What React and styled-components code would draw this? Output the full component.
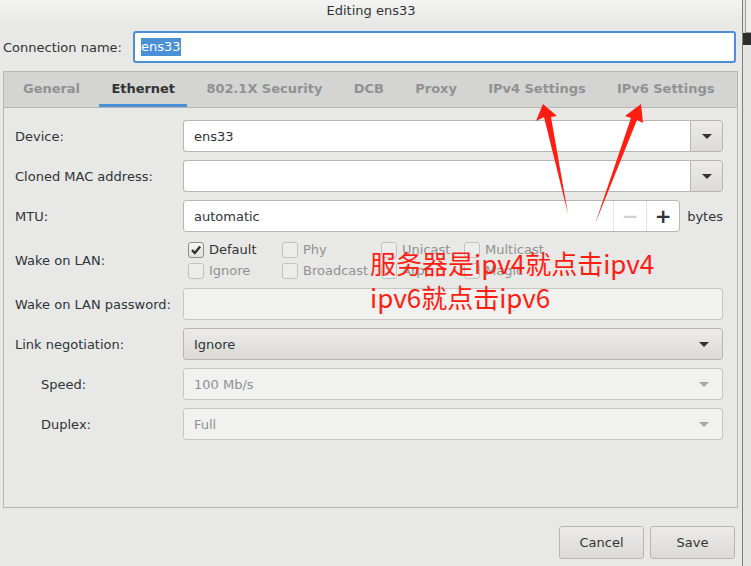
import React from 'react'
import styled, { createGlobalStyle, css } from 'styled-components'

const GlobalStyle = createGlobalStyle`
  html, body {
    margin: 0;
    padding: 0;
    background: #e8e8e7;
    overflow: hidden;
  }
  body {
    font-family: "DejaVu Sans", "Liberation Sans", sans-serif;
    font-size: 13px;
    color: #2e3436;
  }
`

const Shell = styled.div`
  position: relative;
  display: flex;
  width: 751px;
  height: 566px;
  overflow: hidden;
`

const Dialog = styled.div`
  width: 742px;
  display: flex;
  flex-direction: column;
`

const Edge = styled.div`
  flex: 1;
  border-left: 1px solid #7f7f7f;
  display: flex;
  flex-direction: column;
  background: #e4e4e3;
`

const EdgeThumb = styled.div`
  height: 32px;
  margin-left: 2px;
  border-left: 1px solid #9c9c9c;
  border-bottom: 1px solid #9c9c9c;
  background: #ededec;
`

const EdgeDark = styled.div`
  height: 12px;
  background: #2d2d2d;
`

const TitleBar = styled.div`
  height: 24px;
  line-height: 22px;
  text-align: center;
  background: linear-gradient(#f4f4f3, #e8e8e7);
  color: #2e3436;
`

const NameRow = styled.div`
  display: flex;
  align-items: center;
  margin-top: 7px;
  padding: 0 6px 0 3px;
`

const NameLabel = styled.span`
  width: 130px;
`

const NameInput = styled.div`
  flex: 1;
  height: 28px;
  border: 2px solid #4a90d9;
  border-radius: 3px;
  background: #fff;
  display: flex;
  align-items: center;
  padding-left: 6px;
`

const Selected = styled.span`
  background: #4a90d9;
  color: #fff;
  line-height: 18px;
`

const Notebook = styled.div`
  margin: 8px 4px 0 3px;
  height: 435px;
  border: 1px solid #b6b6b3;
  display: flex;
  flex-direction: column;
`

const TabBar = styled.div`
  height: 35px;
  display: flex;
  gap: 7.4px;
  padding-left: 7px;
  background: #d4d4d3;
  border-bottom: 1px solid #b6b6b3;
`

const Tab = styled.div`
  padding: 0 12px;
  display: flex;
  align-items: center;
  font-weight: bold;
  letter-spacing: -0.03px;
  color: ${(p) => (p.$active ? '#2e3436' : '#8f9293')};
  border-bottom: 3px solid ${(p) => (p.$active ? '#4a90d9' : 'transparent')};
`

const Content = styled.div`
  flex: 1;
  padding: 12px 14px 0 11px;
`

const Form = styled.div`
  display: grid;
  grid-template-columns: 168px 1fr;
  row-gap: 8px;
  align-items: center;
`

const Label = styled.span`
  padding-left: ${(p) => (p.$indent ? '26px' : '0')};
`

const fieldBox = css`
  height: 30px;
  border: 1px solid #b6b6b3;
  border-radius: 3px;
  box-sizing: content-box;
`

const Combo = styled.div`
  display: flex;
`

const Entry = styled.div`
  ${fieldBox};
  flex: 1;
  display: flex;
  align-items: center;
  padding-left: 10px;
  background: ${(p) => (p.$disabled ? '#f1f1f0' : '#fff')};
  border-color: ${(p) => (p.$disabled ? '#c8c6c3' : '#b6b6b3')};
  ${(p) =>
    p.$joined &&
    css`
      border-right: none;
      border-radius: 3px 0 0 3px;
    `}
`

const DropButton = styled.div`
  ${fieldBox};
  width: 31px;
  display: flex;
  align-items: center;
  justify-content: center;
  border-radius: 0 3px 3px 0;
  background: linear-gradient(#edebe9, #dcdad6);
`

const Caret = styled.span`
  width: 0;
  height: 0;
  border-left: 5px solid transparent;
  border-right: 5px solid transparent;
  border-top: 5px solid ${(p) => (p.$disabled ? '#a3a5a6' : '#2e3436')};
`

const SelectBox = styled.div`
  ${fieldBox};
  display: flex;
  align-items: center;
  justify-content: space-between;
  padding: 0 13px 0 10px;
  color: ${(p) => (p.$disabled ? '#8f9293' : '#2e3436')};
  border-color: ${(p) => (p.$disabled ? '#c8c6c3' : '#b6b6b3')};
  background: ${(p) => (p.$disabled ? '#f1f1f0' : 'linear-gradient(#edebe9, #dcdad6)')};
`

const SpinRow = styled.div`
  display: flex;
  align-items: center;
  gap: 7px;
`

const Spin = styled.div`
  ${fieldBox};
  flex: 1;
  display: flex;
  background: #fff;
`

const SpinText = styled.div`
  flex: 1;
  display: flex;
  align-items: center;
  padding-left: 10px;
`

const SpinButton = styled.div`
  width: 32px;
  border-left: 1px solid #e4e4e3;
  display: flex;
  align-items: center;
  justify-content: center;
  font-size: 20px;
  font-weight: bold;
  color: ${(p) => (p.$disabled ? '#d2d2d1' : '#2e3436')};
`

const CheckGrid = styled.div`
  display: grid;
  grid-template-columns: 94px 99px 83px 1fr;
  grid-template-rows: 21px 21px;
  padding-left: 5px;
  height: 40px;
  align-content: center;
`

const CheckItem = styled.label`
  display: flex;
  align-items: center;
  gap: 5px;
  color: ${(p) => (p.$disabled ? '#8f9293' : '#2e3436')};
`

const Box = styled.span`
  width: 14px;
  height: 14px;
  border: 1px solid ${(p) => (p.$checked ? '#8a8d8e' : '#c4c2bf')};
  border-radius: 3px;
  background: ${(p) => (p.$checked ? 'linear-gradient(#f6f6f5, #e2e1de)' : '#ececeb')};
  display: flex;
  align-items: center;
  justify-content: center;
`

const Footer = styled.div`
  display: flex;
  justify-content: flex-end;
  gap: 6px;
  padding: 18px 7px 0 0;
`

const Button = styled.div`
  width: 83px;
  height: 31px;
  border: 1px solid #b6b6b3;
  border-radius: 3px;
  background: linear-gradient(#edebe9, #dcdad6);
  display: flex;
  align-items: center;
  justify-content: center;
`

const Note = styled.div`
  position: absolute;
  left: 370px;
  top: 246px;
  font-family: "Noto Sans CJK SC", "Noto Sans", sans-serif;
  font-size: 26px;
  line-height: 34px;
  color: #ff1d12;
  white-space: nowrap;
  pointer-events: none;
`

const Arrows = styled.svg`
  position: absolute;
  left: 0;
  top: 0;
  pointer-events: none;
`

const tabs = ['General', 'Ethernet', '802.1X Security', 'DCB', 'Proxy', 'IPv4 Settings', 'IPv6 Settings']

const wake = [
  ['Default', true],
  ['Phy', false],
  ['Unicast', false],
  ['Multicast', false],
  ['Ignore', false],
  ['Broadcast', false],
  ['Arp', false],
  ['Magic', false],
]

const Check = ({ label, checked }) => (
  <CheckItem $disabled={!checked}>
    <Box $checked={checked}>
      {checked && (
        <svg width="12" height="12" viewBox="0 0 12 12">
          <path d="M2 6.2 L4.8 9 L10.2 2.6" fill="none" stroke="#2e3436" strokeWidth="2.4" />
        </svg>
      )}
    </Box>
    {label}
  </CheckItem>
)

export default function App() {
  return (
    <Shell>
      <GlobalStyle />
      <Dialog>
        <TitleBar>Editing ens33</TitleBar>
        <NameRow>
          <NameLabel>Connection name:</NameLabel>
          <NameInput><Selected>ens33</Selected></NameInput>
        </NameRow>
        <Notebook>
          <TabBar>
            {tabs.map((t) => (
              <Tab key={t} $active={t === 'Ethernet'}>{t}</Tab>
            ))}
          </TabBar>
          <Content>
            <Form>
              <Label>Device:</Label>
              <Combo>
                <Entry $joined>ens33</Entry>
                <DropButton><Caret /></DropButton>
              </Combo>

              <Label>Cloned MAC address:</Label>
              <Combo>
                <Entry $joined />
                <DropButton><Caret /></DropButton>
              </Combo>

              <Label>MTU:</Label>
              <SpinRow>
                <Spin>
                  <SpinText>automatic</SpinText>
                  <SpinButton $disabled>−</SpinButton>
                  <SpinButton>+</SpinButton>
                </Spin>
                bytes
              </SpinRow>

              <Label>Wake on LAN:</Label>
              <CheckGrid>
                {wake.map(([l, c]) => (
                  <Check key={l} label={l} checked={c} />
                ))}
              </CheckGrid>

              <Label>Wake on LAN password:</Label>
              <Entry $disabled />

              <Label>Link negotiation:</Label>
              <SelectBox>Ignore<Caret /></SelectBox>

              <Label $indent>Speed:</Label>
              <SelectBox $disabled>100 Mb/s<Caret $disabled /></SelectBox>

              <Label $indent>Duplex:</Label>
              <SelectBox $disabled>Full<Caret $disabled /></SelectBox>
            </Form>
          </Content>
        </Notebook>
        <Footer>
          <Button>Cancel</Button>
          <Button>Save</Button>
        </Footer>
      </Dialog>
      <Edge>
        <EdgeThumb />
        <EdgeDark />
      </Edge>

      <Note>
        <div>服务器是ipv4就点击ipv4</div>
        <div>ipv6就点击ipv6</div>
      </Note>
      <Arrows width="751" height="566" viewBox="0 0 751 566">
        <polygon points="543,104 536,121 544,117 568,214 551,117 557,116" fill="#ff1d12" />
        <polygon points="641,104 625,116 631,118 595,224 637,120 643,123" fill="#ff1d12" />
      </Arrows>
    </Shell>
  )
}
